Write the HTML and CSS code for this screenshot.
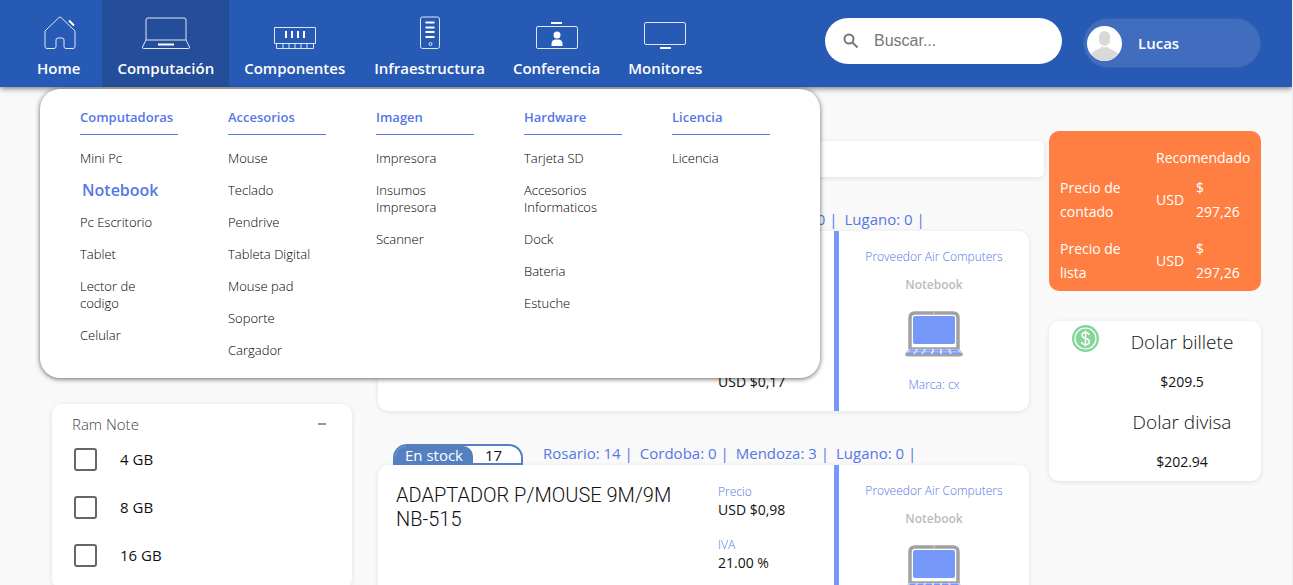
FILE: index.html
```html
<!DOCTYPE html>
<html lang="es">
<head>
<meta charset="utf-8">
<title>Tienda</title>
<link rel="stylesheet" href="styles.css">
</head>
<body>
<svg class="sprite" aria-hidden="true">
  <symbol id="laptop" viewBox="0 0 58 46">
    <path d="M5 38V7Q5 2 10 2H48Q53 2 53 7V38Z" fill="#fff" stroke="#a1a1a1" stroke-width="3.500"/>
    <path d="M29 0V4" stroke="#ccc"/>
    <rect x="8" y="5" width="42" height="28" rx="2" fill="#7598fa"/>
    <path d="M4 38H54L58 43Q58 45.500 54 45.500H4Q0 45.500 0 43Z" fill="#a1a1a1"/>
    <path d="M4 38H54L57 43H1Z" fill="#d8e0f5"/>
    <path d="M5 38.500H11L10 40.500H4ZM13 38.500H19L18 40.500H12ZM21 38.500H27V40.500H20ZM29 38.500H35V40.500H29ZM37 38.500H43L44 40.500H37ZM45 38.500H53L54 40.500H46ZM3 41.300H9L8 43H1ZM11 41.300H17L16 43H10ZM19 41.300H26V43H18ZM28 41.300H35V43H28ZM37 41.300H44L45 43H37ZM46 41.300H55L57 43H47Z" fill="#7598fa"/>
  </symbol>
</svg>
<header class="topbar">
  <nav class="nav">
    <a class="nav-item nav-home" href="#">
      <svg width="38" height="34" viewBox="-4 0 38 34"><path d="M3 32.500Q1 32.500 1 30.500V15L15 1.500Q16 .5 17 1.500L31 15V30.500Q31 32.500 29 32.500H22Q20 32.500 20 30.500V24Q20 22 18 22H14Q12 22 12 24V30.500Q12 32.500 10 32.500Z"/><path class="bold" d="M25 4.500L30 9.500"/></svg>
      Home</a>
    <div class="nav-group">
      <a class="nav-item active" href="#">
        <svg width="48" height="34" viewBox="0 0 48 34"><path d="M4 24V4Q4 2 6 2H42Q44 2 44 4V24ZM4 24L.5 31Q0 32.500 1.500 32.500H46.500Q48 32.500 47.500 31L44 24"/><path class="bold" d="M16 28.500H32"/></svg>
        Computación</a>
      <div class="menu">
        <section><h2>Computadoras</h2><ul><li><a href="#">Mini Pc</a></li><li><a class="selected" href="#">Notebook</a></li><li><a href="#">Pc Escritorio</a></li><li><a href="#">Tablet</a></li><li><a href="#">Lector de codigo</a></li><li><a href="#">Celular</a></li></ul></section>
        <section><h2>Accesorios</h2><ul><li><a href="#">Mouse</a></li><li><a href="#">Teclado</a></li><li><a href="#">Pendrive</a></li><li><a href="#">Tableta Digital</a></li><li><a href="#">Mouse pad</a></li><li><a href="#">Soporte</a></li><li><a href="#">Cargador</a></li></ul></section>
        <section><h2>Imagen</h2><ul><li><a href="#">Impresora</a></li><li><a href="#">Insumos Impresora</a></li><li><a href="#">Scanner</a></li></ul></section>
        <section><h2>Hardware</h2><ul><li><a href="#">Tarjeta SD</a></li><li><a href="#">Accesorios Informaticos</a></li><li><a href="#">Dock</a></li><li><a href="#">Bateria</a></li><li><a href="#">Estuche</a></li></ul></section>
        <section><h2>Licencia</h2><ul><li><a href="#">Licencia</a></li></ul></section>
      </div>
    </div>
    <a class="nav-item" href="#">
      <svg width="42" height="34" viewBox="0 0 42 34"><path d="M.5 11.500H41.500V27.500H.5ZM2.500 27.500V32.500H39.500V27.500M9 28V32M15 28V32M21 28V32M27 28V32M33 28V32"/><path class="bold" d="M12 15V22M18 15V22M24 15V22M30 15V22"/></svg>
      Componentes</a>
    <a class="nav-item compact" href="#">
      <svg width="20" height="34" viewBox="0 0 20 34"><rect x=".5" y="1" width="19" height="31.500" rx="2"/><path class="bold" d="M5.500 6.500H14.500M5.500 11.500H14.500M5.500 16H14.500M5.500 21H14.500"/><circle cx="10.500" cy="28" r="1.500"/></svg>
      Infraestructura</a>
    <a class="nav-item compact" href="#">
      <svg width="42" height="34" viewBox="0 0 42 34"><rect x=".5" y="10.500" width="41" height="22" rx="1.500"/><path class="bold" d="M15 7H26"/><circle class="solid" cx="21" cy="19" r="3.500"/><path class="solid" d="M15.500 30V28Q15.500 24 19 23.500H23Q26.500 24 26.500 28V30Z"/></svg>
      Conferencia</a>
    <a class="nav-item compact" href="#">
      <svg width="42" height="34" viewBox="0 0 42 34"><rect x=".5" y="6.500" width="41" height="22" rx="1.500"/><path class="bold" d="M16 32H27"/></svg>
      Monitores</a>
  </nav>
  <label class="search">
    <svg width="16" height="16" viewBox="0 0 16 16"><circle cx="6" cy="6" r="4.500"/><path d="M9.500 9.500L14.500 14.500"/></svg>
    <input type="text" placeholder="Buscar..." aria-label="Buscar">
  </label>
  <button class="user" type="button">
    <svg width="35" height="35" viewBox="0 0 35 35"><circle cx="17.500" cy="17.500" r="17.500" fill="#fff"/><rect x="12" y="5" width="11" height="15" rx="5.500" fill="#d9d9d9"/><path d="M4 28Q7 24 14 22V20H21V22Q28 24 31 28Q26 35 17.500 35Q9 35 4 28Z" fill="#d9d9d9"/><path d="M13 18.500Q17.500 23 22 18.500" fill="none" stroke="#fff" stroke-width="1.500"/></svg>
    Lucas
  </button>
</header>

<main class="page">
  <aside class="filter">
    <div class="filter-head"><span>Ram Note</span><button type="button" aria-label="Contraer"></button></div>
    <label class="check"><input type="checkbox">4 GB</label>
    <label class="check"><input type="checkbox">8 GB</label>
    <label class="check"><input type="checkbox">16 GB</label>
  </aside>

  <div class="results">
    <div class="results-bar"></div>
    <article class="product">
      <div class="stock"><div class="tag"><span class="tag-name">En stock</span><span class="tag-count">104</span></div>
        <span>Rosario: 104 |</span><span>Cordoba: 0 |</span><span>Mendoza: 0 |</span><span>Lugano: 0 |</span></div>
      <div class="card">
        <h3>ADAPTADOR</h3>
        <dl><div><dt>Precio</dt><dd>USD $0,14</dd></div><div><dt>IVA</dt><dd>21.00 %</dd></div><div><dt>Precio final</dt><dd>USD $0,17</dd></div></dl>
        <div class="vendor"><p>Proveedor Air Computers</p><p class="kind">Notebook</p><svg width="58" height="46"><use href="#laptop"/></svg><p>Marca: cx</p></div>
      </div>
    </article>
    <article class="product">
      <div class="stock"><div class="tag"><span class="tag-name">En stock</span><span class="tag-count">17</span></div>
        <span>Rosario: 14 |</span><span>Cordoba: 0 |</span><span>Mendoza: 3 |</span><span>Lugano: 0 |</span></div>
      <div class="card">
        <h3>ADAPTADOR P/MOUSE 9M/9M NB-515</h3>
        <dl><div><dt>Precio</dt><dd>USD $0,98</dd></div><div><dt>IVA</dt><dd>21.00 %</dd></div></dl>
        <div class="vendor"><p>Proveedor Air Computers</p><p class="kind">Notebook</p><svg width="58" height="46"><use href="#laptop"/></svg><p>Marca: cx</p></div>
      </div>
    </article>
  </div>

  <aside class="side">
    <table class="prices">
      <thead><tr><td></td><th colspan="2">Recomendado</th></tr></thead>
      <tbody>
        <tr><th>Precio de contado</th><td>USD</td><td>$ 297,26</td></tr>
        <tr><th>Precio de lista</th><td>USD</td><td>$ 297,26</td></tr>
      </tbody>
    </table>
    <section class="dollar">
      <svg width="27" height="27" viewBox="0 0 27 27"><circle cx="13.500" cy="13.500" r="13.500" fill="#86d69b"/><circle cx="13.500" cy="13.500" r="10.500" fill="none" stroke="#fff" stroke-width="1.200"/><path d="M17 10Q16.500 7.500 13.500 7.500Q10 7.500 10 10Q10 12.500 13.500 13.300Q17.300 14.300 17.300 17Q17.300 19.500 13.500 19.500Q10 19.500 9.700 17M13.500 5.500V21.500" fill="none" stroke="#fff" stroke-width="1.500"/></svg>
      <div><h3>Dolar billete</h3><p>$209.5</p><h3>Dolar divisa</h3><p>$202.94</p></div>
    </section>
  </aside>
</main>
</body>
</html>
```
FILE: styles.css
```css
* { box-sizing: border-box; }
body {
  margin: 0;
  height: 100vh;
  overflow: hidden;
  border-right: 1px solid #eee;
  background: #f9f9f9;
  color: #111;
  font: 15px/24px "Open Sans", "Noto Sans", sans-serif;
}
h2, h3, p, ul, dl, dd { margin: 0; padding: 0; }
ul { list-style: none; }
a { color: inherit; text-decoration: none; }
button { border: 0; background: none; padding: 0; font: inherit; color: inherit; }
.sprite { position: absolute; width: 0; height: 0; }

.topbar {
  position: relative;
  z-index: 2;
  display: flex;
  align-items: flex-start;
  height: 87px;
  padding: 0 31px 0 15px;
  background: #275ab5;
  box-shadow: 0 1px 6px rgba(0, 0, 0, .6);
}
.nav { display: flex; align-self: stretch; flex: 1; }
.nav-item {
  display: flex;
  flex-direction: column;
  align-items: center;
  gap: 6px;
  height: 100%;
  padding: 16px 15px 0;
  color: #fff;
  font-weight: 600;
}
.nav-item.nav-home { padding: 16px 22px 0; }
.nav-item.compact { padding: 16px 14px 0; }
.nav-item.active { background: #244e99; }
.nav-item svg { fill: none; stroke: #dfe7f5; stroke-width: 1; }
.nav-item .bold { stroke: #fff; stroke-width: 2; }
.nav-item .solid { fill: #fff; stroke: none; }

.menu {
  position: absolute;
  top: 89px;
  left: 40px;
  display: grid;
  grid-template-columns: repeat(5, 98px);
  gap: 50px;
  width: 780px;
  padding: 20px 40px 19px;
  border-radius: 20px;
  background: #fff;
  box-shadow: 0 1px 5px rgba(0, 0, 0, .6);
  color: #000;
  font-size: 13px;
  line-height: 17px;
}
.menu h2 {
  padding-bottom: 8px;
  margin-bottom: 15px;
  border-bottom: 1px solid #5577e6;
  color: #5577e6;
  font-size: 13px;
  line-height: 17px;
  font-weight: 600;
}
.menu ul { display: flex; flex-direction: column; gap: 15px; padding-right: 10px; font-weight: 300; }
.menu li a { display: block; }
.menu a.selected { padding-left: 2px; color: #5577e6; font-size: 16px; font-weight: 600; }

.search {
  display: flex;
  align-items: center;
  gap: 15px;
  width: 237px;
  height: 46px;
  margin: 18px 21px 0 0;
  padding: 0 18px;
  border-radius: 23px;
  background: #fff;
}
.search svg { flex: none; fill: none; stroke: #777; stroke-width: 2; }
.search input {
  width: 100%;
  min-width: 0;
  border: 0;
  outline: 0;
  padding: 0;
  background: none;
  font: 16px "Liberation Sans", sans-serif;
}
.search input::placeholder { color: #777; }
.user {
  display: flex;
  align-items: center;
  gap: 16px;
  width: 178px;
  height: 50px;
  margin-top: 18px;
  padding: 0 3px;
  border: 1px solid #3864b0;
  border-radius: 25px;
  background: #406dbd;
  color: #fff;
  font-weight: 600;
}

.page {
  display: grid;
  grid-template-columns: 300px minmax(0, 1fr) 212px;
  align-items: start;
  padding: 44px 31px 0 52px;
}
.filter, .results-bar, .card, .dollar { background: #fff; box-shadow: 0 1px 5px rgba(0, 0, 0, .1); }
.filter { margin-top: 273px; padding: 9px 20px 10px; border-radius: 10px; }
.filter-head { display: flex; justify-content: space-between; align-items: center; line-height: 22px; padding-right: 6px; color: #444; font-weight: 300; }
.filter-head button { width: 8px; height: 2px; background: #999; }
.check { display: flex; align-items: center; gap: 23px; height: 48px; padding-left: 2px; }
.check input {
  appearance: none;
  width: 23px;
  height: 23px;
  margin: 0;
  border: 2px solid #666;
  border-radius: 3px;
}

.results { margin: 10px 5px 0 26px; }
.results-bar { height: 36px; border-radius: 5px; }
.product { margin: 33px 15px 0 0; }
.stock { display: flex; height: 21px; gap: 7px; padding-left: 15px; line-height: 18px; color: #5577e6; white-space: nowrap; }
.tag {
  display: flex;
  width: 130px;
  margin-right: 13px;
  border: 2px solid #5580c0;
  border-radius: 14px 14px 0 0;
  overflow: hidden;
  background: #fff;
}
.tag-name { width: 78px; background: #5580c0; border-radius: 0 10px 0 0; color: #fff; text-align: center; }
.tag-count { padding-left: 12px; color: #111; }
.card {
  display: grid;
  grid-template-columns: minmax(0, 1fr) 116px 195px;
  height: 180px;
  border-radius: 10px;
  overflow: hidden;
}
.card h3 { padding: 18px 18px 0; font: 300 20px/24px Roboto, sans-serif; }
.card dl { display: flex; flex-direction: column; gap: 17px; padding-top: 18px; font-size: 14px; line-height: 18px; }
.card dt { color: #5577e6; font-size: 12px; font-weight: 300; }
.vendor {
  display: flex;
  flex-direction: column;
  align-items: center;
  padding-top: 17px;
  border-left: 5px solid #7598fa;
  color: #5577e6;
  font-size: 12px;
  font-weight: 300;
  line-height: 18px;
}
.vendor .kind { margin-top: 10px; color: #bbb; font-weight: 600; }
.vendor svg { margin: 17px 0 19px; }

.side { display: grid; gap: 30px; }
.prices {
  width: 100%;
  height: 160px;
  border-collapse: collapse;
  border-radius: 10px;
  background: #ff7f42;
  color: #fff;
  font-size: 14px;
}
.prices th { font-weight: 400; text-align: left; }
.prices th, .prices td { padding: 0; }
.prices tbody th { width: 107px; padding: 0 24px 0 11px; }
.prices thead { height: 39px; vertical-align: bottom; }
.prices tbody tr { height: 60px; }
.prices tbody td:last-child { width: 65px; padding-right: 16px; }
.dollar { display: flex; gap: 4px; height: 160px; padding: 0 0 0 23px; border-radius: 10px; }
.dollar svg { flex: none; margin-top: 4px; }
.dollar div { flex: 1; padding-top: 1px; text-align: center; line-height: 40px; }
.dollar h3 { font-size: 19px; font-weight: 300; }
.dollar p { font-size: 14px; }
```
